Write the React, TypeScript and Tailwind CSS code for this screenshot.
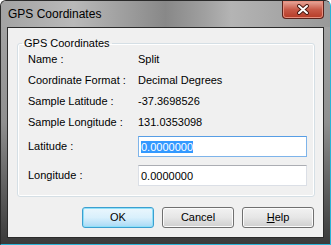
import React from 'react';

const font = { fontFamily: '"Liberation Sans", Arial, sans-serif' };

const InfoRow: React.FC<{ label: string; value: string }> = ({ label, value }) => (
  <div className="flex h-[21px] items-center">
    <span className="w-[110px]">{label}</span>
    <span>{value}</span>
  </div>
);

const WinButton: React.FC<{ isDefault?: boolean; children: React.ReactNode }> = ({
  isDefault,
  children,
}) => (
  <button
    type="button"
    className={
      isDefault
        ? 'flex h-[21px] w-[72px] items-center justify-center rounded-[3px] border border-[#3c9fd0] bg-linear-to-b from-[#eaf6fd] via-[#d9f0fc] to-[#a7d9f5] shadow-[inset_0_0_0_1px_#8fe0f8] text-[11px] text-black'
        : 'flex h-[21px] w-[72px] items-center justify-center rounded-[3px] border border-[#707070] bg-linear-to-b from-[#f2f2f2] via-[#e6e6e6] to-[#cfcfcf] shadow-[inset_0_0_0_1px_#fbfbfb] text-[11px] text-black'
    }
  >
    {children}
  </button>
);

export default function App() {
  return (
    <div
      style={font}
      className="flex h-[245px] w-[331px] flex-col overflow-hidden rounded-t-[6px] border border-[#2a2a2a] border-r-[#2bb3d6] border-b-[#2bb3d6] bg-linear-to-b from-[#a8a8a8] via-[#8f8f8f] to-[#3a3a3a] px-[6px] text-black"
    >
      {/* Title bar */}
      <div className="-mx-[6px] flex h-[26px] shrink-0 items-start justify-between bg-[linear-gradient(to_right,#a3a3a3_0%,#b9b9b9_22%,#9a9a9a_40%,#888888_50%,#a0a0a0_62%,#b4b4b4_70%,#999999_100%)] pl-[7px] pr-[6px]">
        <span className="mt-[6px] text-[12px] leading-[14px] text-black">GPS Coordinates</span>
        <div className="flex h-[18px] w-[42px] items-center justify-center rounded-b-[4px] border border-t-0 border-[#5a231c] bg-linear-to-b from-[#e8a99d] via-[#c85a48] to-[#b53a25] shadow-[inset_0_0_0_1px_#e7907f]">
          <svg width="14" height="11" viewBox="0 0 14 11">
            <path d="M3 2 L11 9 M11 2 L3 9" stroke="#4b1a12" strokeWidth="4" strokeLinecap="round" />
            <path d="M3 2 L11 9 M11 2 L3 9" stroke="#ffffff" strokeWidth="2" strokeLinecap="round" />
          </svg>
        </div>
      </div>

      {/* Client area */}
      <div className="flex h-[211px] w-[317px] shrink-0 flex-col border border-[#2b2b2b] bg-[#f0f0f0] px-[9px] text-[11px]">
        <fieldset className="mt-[9px] rounded-[3px] border border-[#d5dfe5] shadow-[inset_0_0_0_1px_#ffffff]">
          <legend className="ml-[4px] px-[2px] leading-[12px]">GPS Coordinates</legend>
          <div className="pl-[10px] pr-[7px] pb-[10px]">
            <InfoRow label="Name :" value="Split" />
            <InfoRow label="Coordinate Format :" value="Decimal Degrees" />
            <InfoRow label="Sample Latitude :" value="-37.3698526" />
            <InfoRow label="Sample Longitude :" value="131.0353098" />
            <div className="mt-[3px] flex h-[21px] items-center">
              <span className="w-[110px]">Latitude :</span>
              <div className="flex h-[21px] w-[169px] items-center border border-[#7eb4ea] border-t-[#569de5] bg-white pl-[2px]">
                <span className="bg-[#3399ff] leading-[12px] text-white">0.0000000</span>
              </div>
            </div>
            <div className="mt-[8px] flex h-[21px] items-center">
              <span className="w-[110px]">Longitude :</span>
              <div className="flex h-[21px] w-[169px] items-center border border-[#dbdfe6] border-t-[#abadb3] bg-white pl-[2px]">
                <span className="leading-[12px]">0.0000000</span>
              </div>
            </div>
          </div>
        </fieldset>

        <div className="mt-[10px] flex justify-end gap-[8px]">
          <WinButton isDefault>OK</WinButton>
          <WinButton>Cancel</WinButton>
          <WinButton>
            <span className="underline">H</span>elp
          </WinButton>
        </div>
      </div>
    </div>
  );
}
